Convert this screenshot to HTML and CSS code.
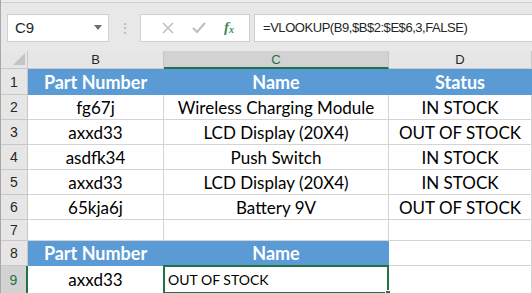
FILE: index.html
```html
<!DOCTYPE html>
<html lang="en">
<head>
    <meta charset="UTF-8">
    <title>VLOOKUP Sheet</title>
    <link rel="stylesheet" href="styles.css">
</head>
<body>
    <div class="window">
        <div class="top-strip"></div>
        <div class="formula-bar">
            <div class="name-box">
                <span>C9</span>
                <span class="drop"></span>
            </div>
            <div class="dots">&#8942;</div>
            <div class="buttons">
                <svg width="12" height="12" viewBox="0 0 12 12"><path d="M1 1 L11 11 M11 1 L1 11" stroke="#bdbdbd" stroke-width="1.5"/></svg>
                <svg width="14" height="12" viewBox="0 0 14 12"><path d="M1 6 L5 10 L13 1" stroke="#bdbdbd" stroke-width="2" fill="none"/></svg>
                <span class="fx">f<sub>x</sub></span>
            </div>
            <div class="formula">=VLOOKUP(B9,$B$2:$E$6,3,FALSE)</div>
        </div>

        <div class="sheet">
            <div class="corner"><span class="tri"></span></div>
            <div class="col-head">B</div>
            <div class="col-head active">C</div>
            <div class="col-head">D</div>

            <div class="row-head">1</div>
            <div class="cell th">Part Number</div>
            <div class="cell th">Name</div>
            <div class="cell th">Status</div>

            <div class="row-head">2</div>
            <div class="cell">fg67j</div>
            <div class="cell">Wireless Charging Module</div>
            <div class="cell">IN STOCK</div>

            <div class="row-head">3</div>
            <div class="cell">axxd33</div>
            <div class="cell">LCD Display (20X4)</div>
            <div class="cell">OUT OF STOCK</div>

            <div class="row-head">4</div>
            <div class="cell">asdfk34</div>
            <div class="cell">Push Switch</div>
            <div class="cell">IN STOCK</div>

            <div class="row-head">5</div>
            <div class="cell">axxd33</div>
            <div class="cell">LCD Display (20X4)</div>
            <div class="cell">IN STOCK</div>

            <div class="row-head">6</div>
            <div class="cell">65kja6j</div>
            <div class="cell">Battery 9V</div>
            <div class="cell">OUT OF STOCK</div>

            <div class="row-head">7</div>
            <div class="cell"></div>
            <div class="cell"></div>
            <div class="cell"></div>

            <div class="row-head">8</div>
            <div class="cell th">Part Number</div>
            <div class="cell th">Name</div>
            <div class="cell"></div>

            <div class="row-head active">9</div>
            <div class="cell">axxd33</div>
            <div class="cell selected">OUT OF STOCK<span class="handle"></span></div>
            <div class="cell"></div>
        </div>
    </div>
</body>
</html>
```

FILE: styles.css
```css
* {
    margin: 0;
    padding: 0;
    box-sizing: border-box;
}

body {
    width: 532px;
    height: 293px;
    overflow: hidden;
    background: #ffffff;
}

.window {
    border-left: 1px solid #a8a8a8;
    height: 293px;
    background: #e8e8e8;
}

.top-strip {
    height: 3px;
    background: #ececec;
    border-bottom: 1px solid #cfcfcf;
}

.formula-bar {
    display: flex;
    align-items: center;
    height: 48px;
    padding: 9px 0 8px 6px;
    font-family: "Liberation Sans", Arial, sans-serif;
}

.name-box,
.buttons,
.formula {
    height: 28px;
    background: #ffffff;
    border: 1px solid #d0d0d0;
    display: flex;
    align-items: center;
}

.name-box {
    width: 102px;
    padding: 0 6px 0 7px;
    justify-content: space-between;
    font-size: 15px;
    color: #262626;
}

.drop {
    width: 0;
    height: 0;
    border-left: 4px solid transparent;
    border-right: 4px solid transparent;
    border-top: 5px solid #6e6e6e;
}

.dots {
    width: 31px;
    text-align: center;
    color: #b0b0b0;
    font-size: 14px;
}

.buttons {
    width: 110px;
    justify-content: space-around;
    padding: 0 6px 0 12px;
}

.fx {
    font-family: "Liberation Serif", serif;
    font-style: italic;
    font-weight: bold;
    color: #3d8a5a;
    font-size: 15px;
}

.fx sub {
    font-size: 10px;
    vertical-align: -1px;
}

.formula {
    flex: 1;
    margin-left: 4px;
    border-right: none;
    padding-left: 8px;
    font-size: 13px;
    letter-spacing: -0.45px;
    color: #262626;
}

.sheet {
    display: grid;
    grid-template-columns: 27px 136px 225px 143px;
    grid-template-rows: 18px 26px 25px 25px 25px 25px 25px 21px 25px 28px;
    font-family: Lato, "Open Sans", sans-serif;
}

.corner {
    background: #e6e6e6;
    border-right: 1px solid #c8c8c8;
    border-bottom: 1px solid #c8c8c8;
    position: relative;
}

.tri {
    position: absolute;
    right: 2px;
    bottom: 3px;
    width: 0;
    height: 0;
    border-left: 12px solid transparent;
    border-bottom: 12px solid #c4c4c4;
}

.col-head {
    background: #e6e6e6;
    border-right: 1px solid #c8c8c8;
    border-bottom: 1px solid #c8c8c8;
    display: flex;
    align-items: center;
    justify-content: center;
    font-family: "Liberation Sans", Arial, sans-serif;
    font-size: 13px;
    color: #262626;
}

.col-head.active {
    background: #d2d2d2;
    border-bottom: 2px solid #217346;
    color: #217346;
}

.row-head {
    background: #e6e6e6;
    border-right: 1px solid #c8c8c8;
    border-bottom: 1px solid #c8c8c8;
    display: flex;
    align-items: center;
    justify-content: center;
    font-family: "Liberation Sans", Arial, sans-serif;
    font-size: 14px;
    color: #262626;
}

.row-head.active {
    background: #d2d2d2;
    border-right: 2px solid #217346;
    color: #217346;
}

.cell {
    background: #ffffff;
    border-right: 1px solid #d4d4d4;
    border-bottom: 1px solid #d4d4d4;
    display: flex;
    align-items: center;
    justify-content: center;
    font-size: 17px;
    color: #000000;
    white-space: nowrap;
}

.cell.th {
    background: #5b9bd5;
    border-color: #5b9bd5;
    color: #ffffff;
    font-weight: bold;
    font-size: 18px;
}

.cell.selected {
    justify-content: flex-start;
    padding-left: 3px;
    font-size: 14px;
    border: 2px solid #217346;
    margin: -1px 0 0 -1px;
    position: relative;
}

.handle {
    position: absolute;
    right: -4px;
    bottom: -4px;
    width: 6px;
    height: 6px;
    background: #217346;
    border: 1px solid #ffffff;
}
```
